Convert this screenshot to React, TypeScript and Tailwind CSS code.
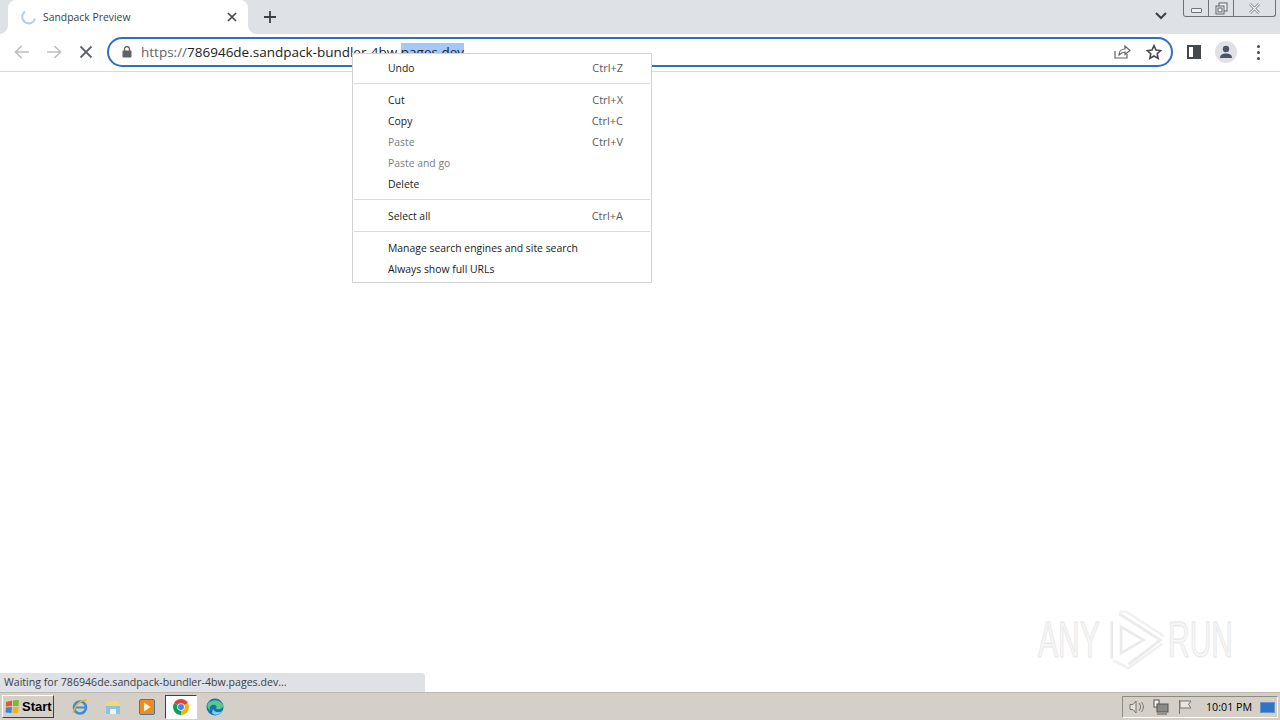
import React from "react";

function Row({ label, shortcut, disabled }: { label: string; shortcut?: string; disabled?: boolean }) {
  return (
    <div className="flex h-[21px] items-center justify-between pl-[35px] pr-[28px]">
      <span className={disabled ? "text-[#7b7b7b]" : "text-[#1a1a1a]"}>{label}</span>
      {shortcut && <span className="text-[11px] text-[#5a5a5a]">{shortcut}</span>}
    </div>
  );
}

function Sep() {
  return (
    <div className="h-[11px] px-px pt-[4px]">
      <div className="h-px w-full bg-[#d9dbde]" />
    </div>
  );
}

function Menu() {
  return (
    <div className="absolute left-[352px] top-[53px] z-20 h-[230px] w-[300px] border border-[#d0d2d5] bg-white pt-[4px] font-['Open_Sans',sans-serif] text-[10.4px]">
      <Row label="Undo" shortcut="Ctrl+Z" />
      <Sep />
      <Row label="Cut" shortcut="Ctrl+X" />
      <Row label="Copy" shortcut="Ctrl+C" />
      <Row label="Paste" shortcut="Ctrl+V" disabled />
      <Row label="Paste and go" disabled />
      <Row label="Delete" />
      <Sep />
      <Row label="Select all" shortcut="Ctrl+A" />
      <Sep />
      <Row label="Manage search engines and site search" />
      <Row label="Always show full URLs" />
    </div>
  );
}

function TabBar() {
  return (
    <div className="relative flex h-[34px] items-end bg-[#dee1e6]">
      <div className="relative ml-[8px] flex h-[34px] w-[240px] items-center rounded-t-[8px] bg-white">
        <svg width="16" height="16" viewBox="0 0 16 16" className="ml-[13px]">
          <path d="M4 2.5 A6.5 6.5 0 1 0 14 9.5" fill="none" stroke="#b9cdf0" strokeWidth="2" />
        </svg>
        <span className="ml-[6px] pt-px font-['Open_Sans',sans-serif] text-[10.4px] text-[#3c4043]">Sandpack Preview</span>
        <svg width="10" height="10" viewBox="0 0 10 10" className="absolute left-[219px] top-[12px]">
          <path d="M1 1 L9 9 M9 1 L1 9" stroke="#45484c" strokeWidth="1.7" />
        </svg>
        <div className="absolute bottom-0 left-[-8px] h-[8px] w-[8px] bg-[radial-gradient(circle_at_0_0,#dee1e6_7.5px,white_8px)]" />
        <div className="absolute bottom-0 right-[-8px] h-[8px] w-[8px] bg-[radial-gradient(circle_at_100%_0,#dee1e6_7.5px,white_8px)]" />
      </div>
      <svg width="12" height="12" viewBox="0 0 12 12" className="mb-[11px] ml-[16px]">
        <path d="M6 0 V12 M0 6 H12" stroke="#3c4043" strokeWidth="1.8" />
      </svg>
      <svg width="12" height="8" viewBox="0 0 12 8" className="absolute left-[1155px] top-[12px]">
        <path d="M1 1 L6 6 L11 1" fill="none" stroke="#3c4043" strokeWidth="2" />
      </svg>
      <div className="absolute left-[1183px] top-0 flex h-[17px] w-[93px] rounded-b-[3px] border border-t-0 border-[#6e7378]">
        <div className="flex w-[25px] items-center justify-center border-r border-[#6e7378] pt-[5px]">
          <div className="h-[5px] w-[11px] rounded-[1px] border border-[#6e7378] bg-[#eef0f3]" />
        </div>
        <div className="flex w-[25px] items-center justify-center border-r border-[#6e7378]">
          <svg width="13" height="13" viewBox="0 0 13 13">
            <rect x="4" y="1" width="8" height="8" fill="#eef0f3" stroke="#5f6368" />
            <rect x="1" y="4" width="8" height="8" fill="#eef0f3" stroke="#5f6368" />
            <rect x="3" y="6" width="4" height="4" fill="none" stroke="#5f6368" />
          </svg>
        </div>
        <div className="flex flex-1 items-center justify-center">
          <svg width="13" height="11" viewBox="0 0 13 11">
            <path d="M2 1 L11 10 M11 1 L2 10" stroke="#7c8186" strokeWidth="2.6" />
            <path d="M2 1 L11 10 M11 1 L2 10" stroke="#eef0f3" strokeWidth="1.2" />
          </svg>
        </div>
      </div>
    </div>
  );
}

function Toolbar() {
  return (
    <div className="flex h-[38px] items-center border-b border-[#d9dadc] bg-white pb-px">
      <svg width="16" height="14" viewBox="0 0 16 14" className="ml-[14px]">
        <path d="M15 7 H2 M7.5 1 L1.5 7 L7.5 13" fill="none" stroke="#bdc0c5" strokeWidth="1.7" />
      </svg>
      <svg width="16" height="14" viewBox="0 0 16 14" className="ml-[16px]">
        <path d="M1 7 H14 M8.5 1 L14.5 7 L8.5 13" fill="none" stroke="#bdc0c5" strokeWidth="1.7" />
      </svg>
      <svg width="14" height="14" viewBox="0 0 14 14" className="ml-[17px]">
        <path d="M1.5 1.5 L12.5 12.5 M12.5 1.5 L1.5 12.5" stroke="#5f6368" strokeWidth="1.8" />
      </svg>
      <div className="relative ml-[14px] flex h-[30px] w-[1066px] items-center rounded-full border-2 border-[#2f6fc0] bg-white">
        <svg width="10" height="12" viewBox="0 0 10 12" className="ml-[13px]">
          <rect x="0.5" y="4.5" width="9" height="7" rx="1" fill="#5f6368" />
          <path d="M2.5 5 V3 a2.5 2.5 0 0 1 5 0 V5" fill="none" stroke="#5f6368" strokeWidth="1.3" />
        </svg>
        <span className="ml-[9px] whitespace-nowrap pt-px font-['Open_Sans',sans-serif] text-[13.5px] text-[#202124]">
          <span className="text-[#5f6368]">https://</span>786946de.sandpack-bundler-4bw.<span className="bg-[#a5c8fa]">pages.dev</span>
        </span>
        <svg width="18" height="16" viewBox="0 0 18 16" className="absolute left-[1004px] top-[5px]">
          <path d="M2 7 V14 H14 V10 M6 11 C6 7 9 5 12 5 V2 L17 6.5 L12 10.5 V8 C10 8 8 9 6 11 Z" fill="none" stroke="#5f6368" strokeWidth="1.2" />
        </svg>
        <svg width="16" height="16" viewBox="0 0 24 24" className="absolute left-[1037px] top-[5px]">
          <path d="M12 2.5 L15 9 L22 9.8 L16.8 14.5 L18.2 21.5 L12 18 L5.8 21.5 L7.2 14.5 L2 9.8 L9 9 Z" fill="none" stroke="#45484c" strokeWidth="2.4" />
        </svg>
      </div>
      <div className="ml-[14px] flex h-[14px] w-[14px] justify-end border-2 border-[#45484c]">
        <div className="h-full w-[6px] bg-[#45484c]" />
      </div>
      <div className="ml-[14px] flex h-[22px] w-[22px] items-center justify-center overflow-hidden rounded-full bg-[#dfe1e5]">
        <svg width="14" height="14" viewBox="0 0 14 14">
          <circle cx="7" cy="4" r="3.2" fill="#4a5568" />
          <path d="M1 13 C1 9.5 4 8.5 7 8.5 C10 8.5 13 9.5 13 13 Z" fill="#4a5568" />
        </svg>
      </div>
      <div className="ml-[20px] flex flex-col gap-[3px]">
        <div className="h-[3px] w-[3px] rounded-full bg-[#45484c]" />
        <div className="h-[3px] w-[3px] rounded-full bg-[#45484c]" />
        <div className="h-[3px] w-[3px] rounded-full bg-[#45484c]" />
      </div>
    </div>
  );
}

function Watermark() {
  const cls =
    "block origin-left font-['Liberation_Sans',sans-serif] text-[50px] leading-none text-[#f6f6f6] [-webkit-text-stroke:1px_#e6e6e6] scale-x-[0.6]";
  return (
    <div className="absolute left-[1038px] top-[537px] flex items-center">
      <span className={`${cls} w-[70px]`}>ANY</span>
      <svg width="58" height="62" viewBox="0 0 62 64" className="mr-[2px]">
        <path d="M4 12 V52 M12 4 L56 32 L22 58 M14 18 L38 32 L14 46 Z" fill="none" stroke="#ebebeb" strokeWidth="3" />
        <path d="M6 54 L22 62 L58 36 M12 2 L20 2 L60 28" fill="none" stroke="#f0f0f0" strokeWidth="2.5" />
      </svg>
      <span className={`${cls} w-[66px]`}>RUN</span>
    </div>
  );
}

function Taskbar() {
  return (
    <div className="relative flex h-[28px] items-center border-t border-[#bdb9b0] bg-[#d4d0c8] font-['Liberation_Sans',sans-serif]">
      <div className="ml-[2px] flex h-[23px] w-[52px] items-center gap-[2px] border border-b-[#404040] border-l-white border-r-[#404040] border-t-white bg-[#d4d0c8] pl-[2px]">
        <svg width="15" height="15" viewBox="0 0 15 15">
          <path d="M1 3 L7 1.5 L7 7 L1 7.5 Z" fill="#e2592a" />
          <path d="M8 1.5 L14 1 L13.5 7 L8 7 Z" fill="#7db82e" />
          <path d="M1 8.5 L7 8 L6.5 14 L0.5 13.5 Z" fill="#3d84d6" />
          <path d="M8 8 L13.5 8 L13 14 L7.5 14 Z" fill="#f2b21c" />
        </svg>
        <span className="text-[13px] font-bold leading-none text-black">Start</span>
      </div>
      <svg width="18" height="18" viewBox="0 0 18 18" className="ml-[17px]">
        <circle cx="9" cy="9.5" r="6" fill="none" stroke="#3b8fd8" strokeWidth="2.6" />
        <path d="M3 9.5 H15" stroke="#3b8fd8" strokeWidth="2" />
        <path d="M2 15 C5 5 11 2 16 2" fill="none" stroke="#e8b53a" strokeWidth="1.3" />
      </svg>
      <svg width="16" height="16" viewBox="0 0 16 16" className="ml-[16px]">
        <path d="M1 5 L6 2 H14 V14 H1 Z" fill="#f2d77c" />
        <path d="M1 7 H15 V15 H1 Z" fill="#8cc3dc" />
        <rect x="5" y="10" width="6" height="5" fill="#e8f4f8" />
      </svg>
      <div className="ml-[18px] flex h-[16px] w-[16px] items-center justify-center rounded-[2px] border border-[#4a76a8] bg-[#ee8a22]">
        <svg width="8" height="10" viewBox="0 0 8 10">
          <path d="M1 0.5 L7.5 5 L1 9.5 Z" fill="#fff2d8" />
        </svg>
      </div>
      <div className="ml-[10px] flex h-[24px] w-[32px] items-center justify-center border border-b-white border-l-[#404040] border-r-white border-t-[#404040] bg-white">
        <svg width="16" height="16" viewBox="0 0 16 16">
          <path d="M8 8 L14.9 4 A8 8 0 0 0 1.1 4 Z" fill="#db4437" />
          <path d="M8 8 L1.1 4 A8 8 0 0 0 8 16 Z" fill="#0f9d58" />
          <path d="M8 8 L8 16 A8 8 0 0 0 14.9 4 Z" fill="#f4b400" />
          <circle cx="8" cy="8" r="3.8" fill="white" />
          <circle cx="8" cy="8" r="3" fill="#4285f4" />
        </svg>
      </div>
      <svg width="18" height="18" viewBox="0 0 18 18" className="ml-[9px]">
        <circle cx="9" cy="9" r="8.5" fill="#1570b8" />
        <path d="M1.5 6 C5 1 14 1 17 7 C17.5 10 14 12 10 11 C12 8 9 6 6 7 C4 8 3 10 4 13 C2 11 1 8 1.5 6 Z" fill="#58c98a" />
        <path d="M7 11 C9 15 13 15 16 13 C14 17 9 18 6 15 Z" fill="#7fd3f0" />
      </svg>
      <div className="absolute left-[1122px] top-[3px] flex h-[22px] w-[156px] items-center border border-b-white border-l-[#8c8a84] border-r-white border-t-[#8c8a84]">
        <svg width="16" height="16" viewBox="0 0 16 16" className="ml-[6px]">
          <path d="M1 5.5 H4 L7 2 V14 L4 10.5 H1 Z" fill="#e4e2dc" stroke="#77756f" />
          <path d="M10 4 C12 7 12 9 10 12 M12.5 3 C15 6.5 15 9.5 12.5 13" fill="none" stroke="#77756f" />
        </svg>
        <svg width="16" height="16" viewBox="0 0 16 16" className="ml-[8px]">
          <rect x="1" y="1" width="5" height="7" fill="#f4f4f0" stroke="#55534e" />
          <rect x="4" y="5" width="11" height="8" fill="#8a8a86" stroke="#55534e" />
          <path d="M4 15 H14" stroke="#55534e" />
        </svg>
        <svg width="16" height="16" viewBox="0 0 16 16" className="ml-[8px]">
          <path d="M2.5 1 V15" stroke="#77756f" />
          <path d="M3 2 H14 L11.5 5.5 L14 9 H3 Z" fill="#e8e6e0" stroke="#77756f" />
        </svg>
        <span className="ml-[13px] w-[46px] shrink-0 whitespace-nowrap font-['Open_Sans',sans-serif] text-[10.7px] text-black">10:01 PM</span>
        <div className="ml-[8px] h-[11px] w-[15px] shrink-0 border border-[#6d93c4] bg-[#2f74c8]" />
      </div>
    </div>
  );
}

export default function App() {
  return (
    <div className="relative flex h-[720px] w-[1280px] flex-col overflow-hidden bg-white">
      <TabBar />
      <Toolbar />
      <div className="relative flex-1 bg-white">
        <Watermark />
        <div className="absolute bottom-0 left-0 flex h-[19px] w-[425px] items-center rounded-tr-[4px] bg-[#dee1e6] pl-[4px] pt-px font-['Open_Sans',sans-serif] text-[10.6px] text-[#3c4043]">
          Waiting for 786946de.sandpack-bundler-4bw.pages.dev...
        </div>
      </div>
      <Taskbar />
      <Menu />
    </div>
  );
}
